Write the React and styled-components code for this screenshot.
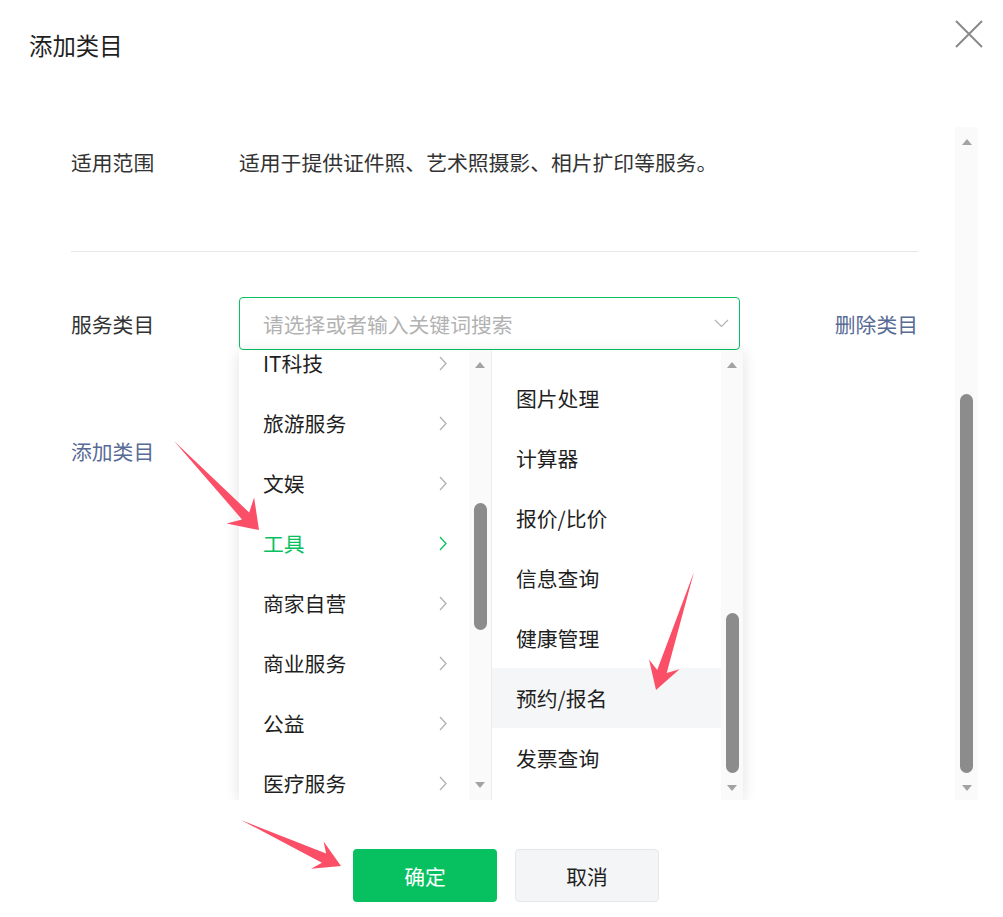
import React from 'react';
import styled, { createGlobalStyle } from 'styled-components';

const GlobalStyle = createGlobalStyle`
  html, body {
    margin: 0;
    padding: 0;
    background: #fff;
  }
  body {
    font-family: "Noto Sans CJK SC", "Noto Sans", sans-serif;
    color: #1f1f1f;
  }
`;

const StyledDialog = styled.div`
  position: relative;
  display: flex;
  flex-direction: column;
  width: 1003px;
  height: 917px;
  background: #fff;
  overflow: hidden;
`;
const StyledHeader = styled.div`
  box-sizing: border-box;
  height: 127px;
  padding: 29px 0 0 29px;
`;
const StyledTitle = styled.div`
  font-size: 23.4px;
  line-height: 32px;
  color: #1f1f1f;
`;
const StyledClose = styled.button`
  position: absolute;
  top: 20px;
  right: 20px;
  width: 28px;
  height: 28px;
  padding: 0;
  border: 0;
  background: none;
  cursor: pointer;
`;
const StyledBody = styled.div`
  display: flex;
  height: 673px;
  padding-right: 25px;
  overflow: hidden;
`;
const StyledContent = styled.div`
  flex: 1;
  padding: 0 37px 0 71px;
  font-size: 20.8px;
  line-height: 30px;
`;
const StyledInfoRow = styled.div`
  display: flex;
  box-sizing: border-box;
  height: 125px;
  padding-top: 20px;
  border-bottom: 1px solid #e7e7e7;
`;
const StyledLabel = styled.div`
  flex: none;
  width: 168px;
  color: #333;
`;
const StyledValue = styled.div`
  color: #333;
`;
const StyledFieldRow = styled.div`
  display: flex;
  align-items: center;
  margin-top: 45px;
`;
const StyledSelectWrap = styled.div`
  position: relative;
  width: 501px;
`;
const StyledSelect = styled.div`
  display: flex;
  align-items: center;
  justify-content: space-between;
  box-sizing: border-box;
  height: 53px;
  padding: 0 10px 0 23px;
  border: 1px solid #07c160;
  border-radius: 4px;
  color: #b2b2b2;
`;
const StyledLink = styled.a`
  color: #576b95;
  text-decoration: none;
  cursor: pointer;
`;
const StyledDeleteLink = styled(StyledLink)`
  margin-left: auto;
`;
const StyledAddLink = styled(StyledLink)`
  display: block;
  margin-top: 86px;
`;

const StyledDropdown = styled.div`
  position: absolute;
  top: 100%;
  left: 0;
  z-index: 2;
  display: flex;
  height: 450px;
  background: #fff;
  box-shadow: 0 2px 14px rgba(0, 0, 0, 0.12);
`;
const StyledColumn = styled.div`
  display: flex;
  width: 252px;
  height: 100%;
  box-sizing: border-box;
  border-left: ${p => (p.$divided ? '1px solid #ececec' : '0')};
`;
const StyledList = styled.div`
  flex: 1;
  overflow: hidden;
`;
const StyledListInner = styled.div`
  margin-top: ${p => p.$offset}px;
`;
const StyledItem = styled.div`
  display: flex;
  align-items: center;
  justify-content: space-between;
  height: 60px;
  padding: 0 22px 0 24px;
  background: ${p => (p.$hover ? '#f5f6f7' : 'transparent')};
  color: ${p => (p.$active ? '#07c160' : '#1f1f1f')};
  cursor: pointer;
`;

const StyledTrack = styled.div`
  flex: none;
  display: flex;
  flex-direction: column;
  width: ${p => p.$width}px;
  height: 100%;
  background: #fafafa;
`;
const StyledArrowBox = styled.div`
  flex: none;
  display: flex;
  align-items: center;
  justify-content: center;
  height: 30px;
`;
const StyledTrackSpace = styled.div`
  flex: 1;
`;
const StyledThumb = styled.div`
  width: 13px;
  height: ${p => p.$height}px;
  margin: ${p => p.$top}px auto 0;
  border-radius: 7px;
  background: #8c8c8c;
`;

const StyledFooter = styled.div`
  display: flex;
  justify-content: center;
  gap: 18px;
  padding: 49px 0 0 9px;
`;
const StyledButton = styled.button`
  width: 144px;
  height: 53px;
  padding: 0;
  border-radius: 4px;
  font-family: inherit;
  font-size: 20.8px;
  cursor: pointer;
`;
const StyledPrimary = styled(StyledButton)`
  border: 0;
  background: #07c160;
  color: #fff;
`;
const StyledDefault = styled(StyledButton)`
  border: 1px solid #e6e7e9;
  background: #f4f5f7;
  color: #1f1f1f;
`;

const StyledMarks = styled.svg`
  position: absolute;
  top: 0;
  left: 0;
  z-index: 5;
  pointer-events: none;
`;

const Chevron = ({ color = '#b2b2b2' }) => (
  <svg width="8" height="15" viewBox="0 0 8 15">
    <path d="M1 1l6 6.5L1 14" fill="none" stroke={color} strokeWidth="1.3" />
  </svg>
);

const Triangle = ({ down }) => (
  <svg width="10" height="6" viewBox="0 0 10 6">
    <path d={down ? 'M0 0h10L5 6z' : 'M0 6h10L5 0z'} fill="#a3a3a3" />
  </svg>
);

// thumb top is measured from the top of the track, arrow box included
const Scrollbar = ({ width = 22, top, height }) => (
  <StyledTrack $width={width}>
    <StyledArrowBox><Triangle /></StyledArrowBox>
    <StyledTrackSpace>
      <StyledThumb $top={top - 30} $height={height} />
    </StyledTrackSpace>
    <StyledArrowBox><Triangle down /></StyledArrowBox>
  </StyledTrack>
);

const arrowPoints = (tx, ty, px, py, head, wing, neck) => {
  const len = Math.hypot(px - tx, py - ty);
  const ux = (px - tx) / len;
  const uy = (py - ty) / len;
  const nx = -uy;
  const ny = ux;
  const bx = px - ux * head;
  const by = py - uy * head;
  const kx = px - ux * head * 0.72;
  const ky = py - uy * head * 0.72;
  return [
    [tx, ty],
    [kx + nx * neck, ky + ny * neck],
    [bx + nx * wing, by + ny * wing],
    [px, py],
    [bx - nx * wing, by - ny * wing],
    [kx - nx * neck, ky - ny * neck],
  ].map(p => p.map(v => v.toFixed(1)).join(',')).join(' ');
};

const marks = [
  [174, 441, 259, 530, 27, 19, 5],
  [694, 572, 656, 690, 27, 16, 5],
  [241, 820, 341, 866, 26, 15, 5],
];

const categories = ['IT科技', '旅游服务', '文娱', '工具', '商家自营', '商业服务', '公益', '医疗服务'];
const tools = ['图片处理', '计算器', '报价/比价', '信息查询', '健康管理', '预约/报名', '发票查询'];

const App = () => (
  <>
    <GlobalStyle />
    <StyledDialog>
      <StyledHeader>
        <StyledTitle>添加类目</StyledTitle>
      </StyledHeader>
      <StyledClose aria-label="关闭">
        <svg width="28" height="28" viewBox="0 0 28 28">
          <path d="M1 1l26 26M27 1L1 27" stroke="#8a8a8a" strokeWidth="2" fill="none" />
        </svg>
      </StyledClose>

      <StyledBody>
        <StyledContent>
          <StyledInfoRow>
            <StyledLabel>适用范围</StyledLabel>
            <StyledValue>适用于提供证件照、艺术照摄影、相片扩印等服务。</StyledValue>
          </StyledInfoRow>

          <StyledFieldRow>
            <StyledLabel>服务类目</StyledLabel>
            <StyledSelectWrap>
              <StyledSelect>
                <span>请选择或者输入关键词搜索</span>
                <svg width="15" height="9" viewBox="0 0 15 9">
                  <path d="M1 1l6.5 6.5L14 1" fill="none" stroke="#b2b2b2" strokeWidth="1.2" />
                </svg>
              </StyledSelect>
              <StyledDropdown>
                <StyledColumn>
                  <StyledList>
                    <StyledListInner $offset={-17}>
                      {categories.map(name => (
                        <StyledItem key={name} $active={name === '工具'}>
                          <span>{name}</span>
                          <Chevron color={name === '工具' ? '#07c160' : '#b2b2b2'} />
                        </StyledItem>
                      ))}
                    </StyledListInner>
                  </StyledList>
                  <Scrollbar top={153} height={127} />
                </StyledColumn>
                <StyledColumn $divided>
                  <StyledList>
                    <StyledListInner $offset={18}>
                      {tools.map(name => (
                        <StyledItem key={name} $hover={name === '预约/报名'}>
                          {name}
                        </StyledItem>
                      ))}
                    </StyledListInner>
                  </StyledList>
                  <Scrollbar top={263} height={160} />
                </StyledColumn>
              </StyledDropdown>
            </StyledSelectWrap>
            <StyledDeleteLink>删除类目</StyledDeleteLink>
          </StyledFieldRow>

          <StyledAddLink>添加类目</StyledAddLink>
        </StyledContent>
        <Scrollbar width={23} top={267} height={379} />
      </StyledBody>

      <StyledFooter>
        <StyledPrimary>确定</StyledPrimary>
        <StyledDefault>取消</StyledDefault>
      </StyledFooter>

      <StyledMarks width="1003" height="917" viewBox="0 0 1003 917">
        {marks.map((m, i) => (
          <polygon key={i} points={arrowPoints(...m)} fill="#fb4f68" />
        ))}
      </StyledMarks>
    </StyledDialog>
  </>
);

export default App;
